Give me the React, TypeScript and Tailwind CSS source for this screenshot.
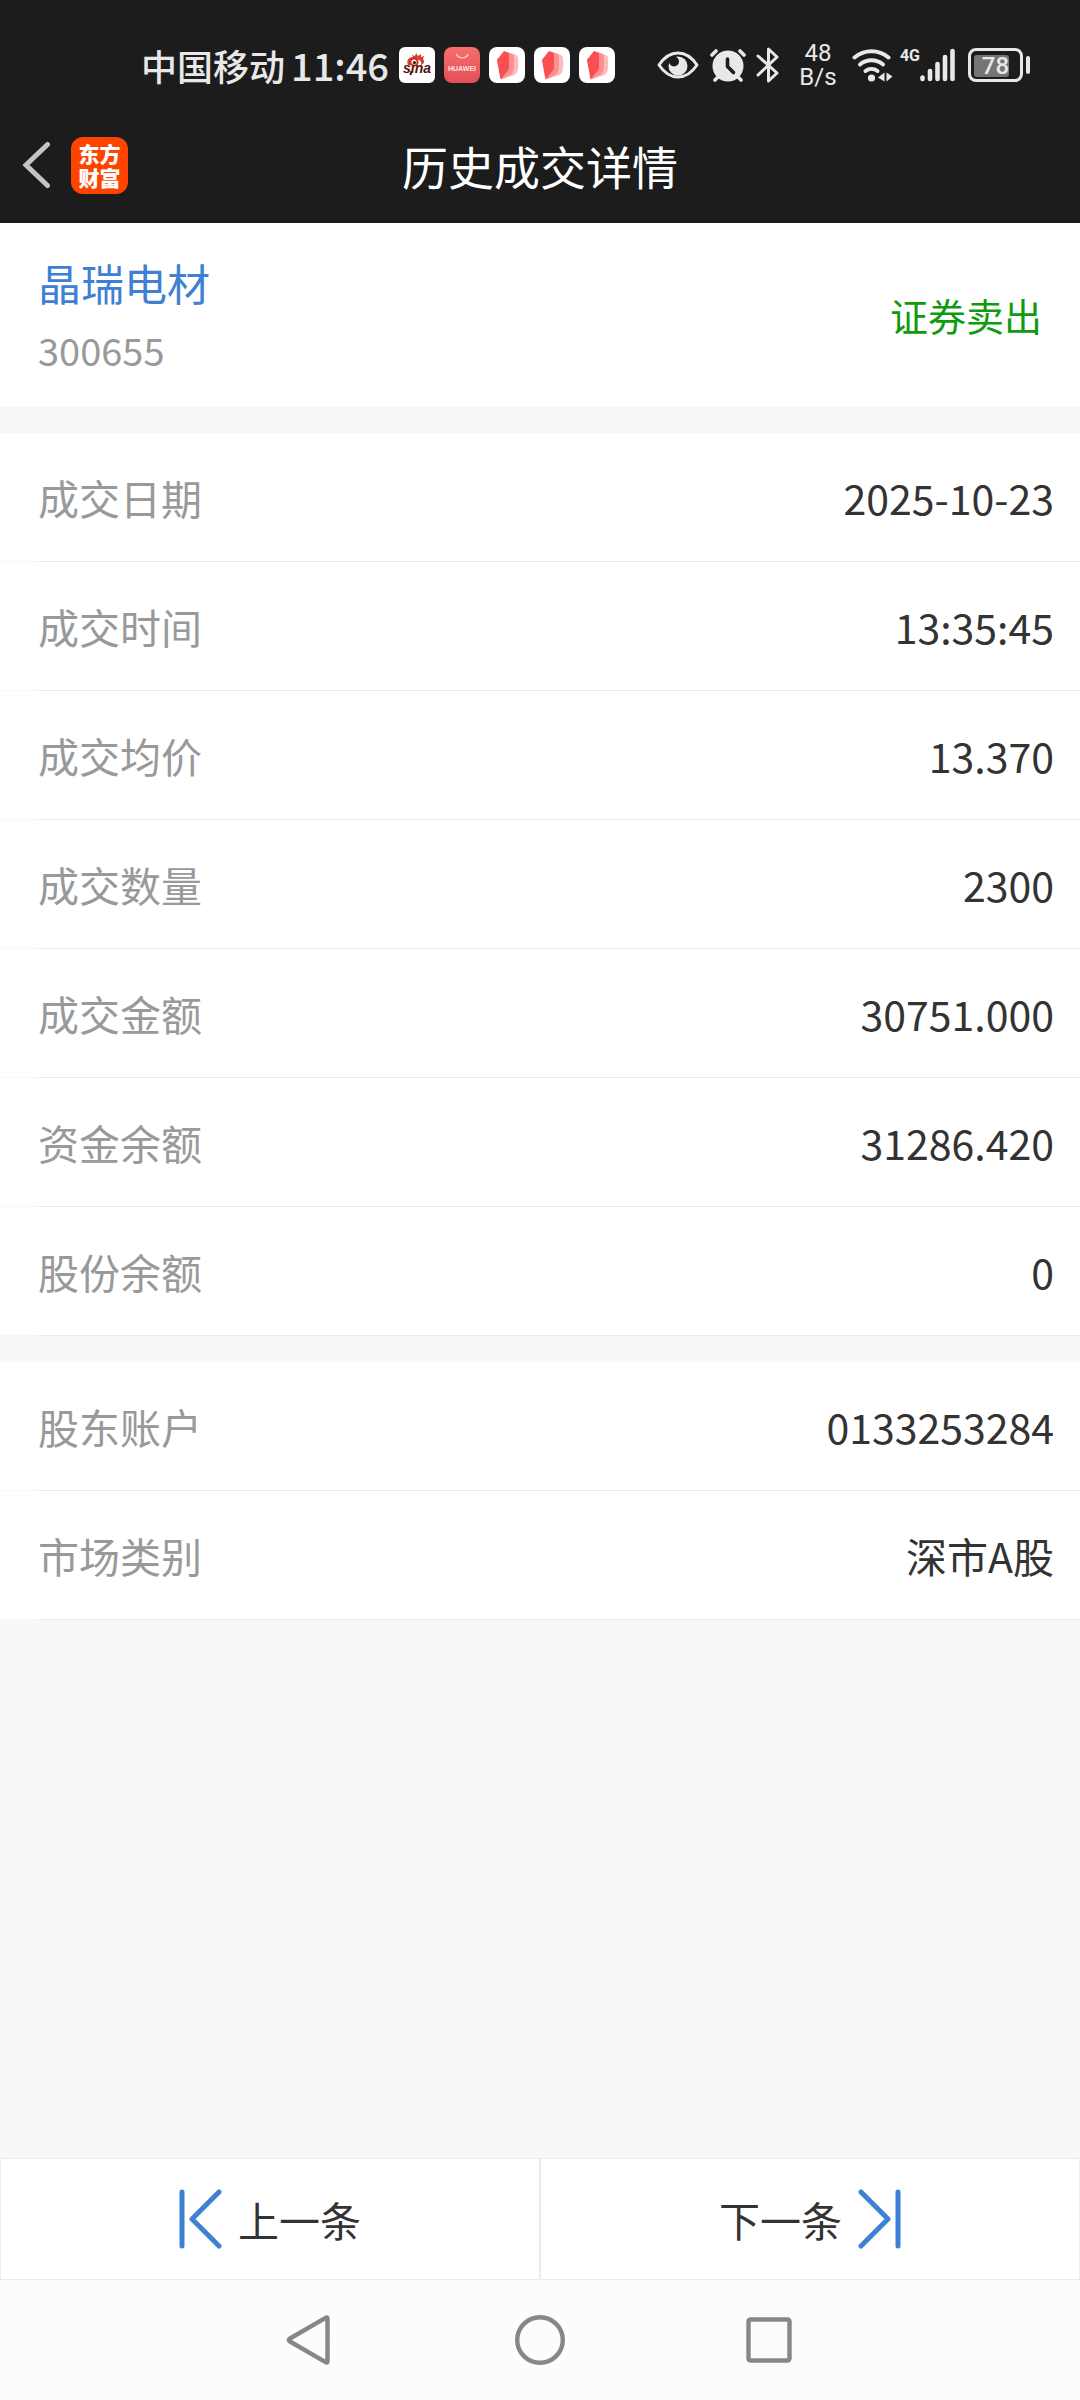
import type { ReactNode } from "react";

type Field = { label: string; value: string };

const tradeFields: Field[] = [
  { label: "成交日期", value: "2025-10-23" },
  { label: "成交时间", value: "13:35:45" },
  { label: "成交均价", value: "13.370" },
  { label: "成交数量", value: "2300" },
  { label: "成交金额", value: "30751.000" },
  { label: "资金余额", value: "31286.420" },
  { label: "股份余额", value: "0" },
];

const accountFields: Field[] = [
  { label: "股东账户", value: "0133253284" },
  { label: "市场类别", value: "深市A股" },
];

function SinaIcon() {
  return (
    <svg className="size-9" viewBox="0 0 36 36" role="img" aria-label="sina">
      <rect width="36" height="36" rx="6" fill="#fff" />
      <path
        d="M9 18c-2-5 1-8 5-8l-1-2 3 1 1-3 2 3 3-2v3l3-1-1 3c2 2 1 5-2 6 1-4-2-6-6-6-4 0-6 3-4 6z"
        fill="#d9402f"
      />
      <circle cx="15" cy="15" r="3.6" fill="none" stroke="#c43325" strokeWidth="2" />
      <circle cx="15.5" cy="15.5" r="1.5" fill="#2a0d0a" />
      <text
        x="18"
        y="25.500"
        textAnchor="middle"
        fontFamily="Liberation Sans, sans-serif"
        fontSize="14"
        fontWeight="700"
        fontStyle="italic"
        fill="#5a130c"
      >
        sina
      </text>
      <path d="M12.500 24l-1 4" stroke="#5a130c" strokeWidth="2" />
    </svg>
  );
}

function HuaweiIcon() {
  return (
    <svg className="size-9" viewBox="0 0 36 36" role="img" aria-label="HUAWEI">
      <defs>
        <linearGradient id="huawei-bg" x1="0" y1="0" x2="0" y2="1">
          <stop offset="0" stopColor="#f4706a" />
          <stop offset="1" stopColor="#e44f59" />
        </linearGradient>
      </defs>
      <rect width="36" height="36" rx="8" fill="url(#huawei-bg)" />
      <path d="M12.500 7a6 5.500 0 0 0 11.500 0" fill="none" stroke="#ffc9c4" strokeWidth="1.300" />
      <text
        x="18"
        y="24"
        textAnchor="middle"
        fontFamily="Liberation Sans, sans-serif"
        fontSize="7"
        fontWeight="700"
        fill="#ffe3e0"
      >
        HUAWEI
      </text>
    </svg>
  );
}

function PagesIcon() {
  return (
    <svg className="size-9" viewBox="0 0 36 36" aria-hidden="true">
      <rect width="36" height="36" rx="8" fill="#fff" />
      <path d="M23 6.500l4 1.500q2 1 2.200 4v8q0 5-4 8l-13 4.500z" fill="#fdbcbc" />
      <path d="M18 5l5 1.500q2 1 2 4v9q0 5-3 8l-10 5z" fill="#fc8f90" />
      <path d="M15 4l4 1.500q1 .5 1 3v12q0 2-1 3l-7.500 9-3.500-19q0-1.500 1-2z" fill="#f94f53" />
    </svg>
  );
}

function EyeIcon() {
  return (
    <svg className="h-7 w-[42px]" viewBox="0 0 42 28" aria-hidden="true">
      <path
        d="M2 14Q10 2 21 2T40 14Q32 26 21 26T2 14z"
        fill="none"
        stroke="#e8e8e8"
        strokeWidth="3"
        strokeLinejoin="round"
      />
      <circle cx="21" cy="15" r="9.500" fill="#e8e8e8" />
      <circle cx="17" cy="10.500" r="5" fill="#1c1c1c" />
    </svg>
  );
}

function AlarmIcon() {
  return (
    <svg className="h-[34px] w-9" viewBox="0 0 36 34" aria-hidden="true">
      <circle cx="18" cy="18" r="15.500" fill="#e8e8e8" />
      <path
        d="M2 7l4-4M34 7l-4-4M5 32l4-4M31 32l-4-4"
        stroke="#e8e8e8"
        strokeWidth="3.600"
        strokeLinecap="round"
      />
      <path
        d="M17.500 11v7.500l6 6"
        fill="none"
        stroke="#1c1c1c"
        strokeWidth="3.600"
        strokeLinecap="round"
        strokeLinejoin="round"
      />
    </svg>
  );
}

function BluetoothIcon() {
  return (
    <svg className="h-9 w-6" viewBox="0 0 24 36" aria-hidden="true">
      <path
        d="M2 9l19 17-8.500 8V2L21 10 2 28"
        fill="none"
        stroke="#e8e8e8"
        strokeWidth="3"
        strokeLinecap="round"
        strokeLinejoin="round"
      />
    </svg>
  );
}

function WifiIcon() {
  return (
    <svg className="h-[34px] w-[41px]" viewBox="0 0 41 34" aria-hidden="true">
      <g fill="none" stroke="#e8e8e8" strokeWidth="4" strokeLinecap="round">
        <path d="M2.500 9.500a26 26 0 0 1 34 0" />
        <path d="M8 16.500a18 18 0 0 1 23 0" />
        <path d="M13.500 23a10 10 0 0 1 12 0" />
      </g>
      <circle cx="19.500" cy="30" r="3.600" fill="#e8e8e8" />
      <path d="M32.500 24.500v9L26 29.500zM34.500 24.500v9l6-5z" fill="#e8e8e8" />
    </svg>
  );
}

function SignalIcon() {
  return (
    <svg className="h-[34px] w-[35px]" viewBox="0 0 35 34" aria-hidden="true">
      <g stroke="#e8e8e8" strokeWidth="4.600" strokeLinecap="round">
        <path d="M2.500 29.500v1.500M10 23v8M17.500 16v15M25 9v22M32.500 3v28" />
      </g>
    </svg>
  );
}

function Battery({ level }: { level: number }) {
  return (
    <div className="flex items-center gap-[3px]">
      <div className="flex h-[34px] w-[55px] items-center rounded-lg border-[3px] border-[#e8e8e8] p-[3px]">
        <div className="grid h-[22px] w-full items-center">
          <div
            className="col-start-1 row-start-1 h-[22px] rounded-[3px] bg-[#757575]"
            style={{ width: `${level + 4}%` }}
          />
          <span className="col-start-1 row-start-1 text-center font-['Roboto','Noto_Sans_CJK_SC',sans-serif] text-2xl leading-6">
            {level}
          </span>
        </div>
      </div>
      <div className="h-[18px] w-1 rounded-full bg-[#e8e8e8]" />
    </div>
  );
}

function StatusBar() {
  return (
    <div className="flex h-[107px] items-center justify-between pt-[23px] pr-[50px] pl-[141px] font-medium text-[#e8e8e8]">
      <div className="flex items-center">
        <span className="text-4xl leading-10">中国移动</span>
        <span className="ml-1.5 text-[38px] leading-10">11:46</span>
        <div className="ml-2.5 flex gap-[9px]">
          <SinaIcon />
          <HuaweiIcon />
          <PagesIcon />
          <PagesIcon />
          <PagesIcon />
        </div>
      </div>
      <div className="flex items-center">
        <EyeIcon />
        <span className="ml-[11px]">
          <AlarmIcon />
        </span>
        <span className="ml-[10px]">
          <BluetoothIcon />
        </span>
        <div className="ml-[18px] flex w-10 flex-col text-center font-['Roboto','Noto_Sans_CJK_SC',sans-serif] text-2xl leading-6 font-normal">
          <span>48</span>
          <span>B/s</span>
        </div>
        <span className="ml-[14px]">
          <WifiIcon />
        </span>
        <span className="ml-[7px] h-[34px] font-['Liberation_Sans_Narrow','Roboto',sans-serif] text-base leading-4 font-bold">
          4G
        </span>
        <SignalIcon />
        <span className="ml-[13px]">
          <Battery level={78} />
        </span>
      </div>
    </div>
  );
}

function TitleBar() {
  return (
    <div className="grid h-[116px] grid-cols-[1fr_auto_1fr] items-center px-[22px] text-white">
      <div className="flex items-center gap-5">
        <button type="button" aria-label="返回">
          <svg className="h-12 w-[29px]" viewBox="0 0 29 48" aria-hidden="true">
            <path
              d="M25.500 3.500L4 24l21.500 20.500"
              fill="none"
              stroke="#c4c4c4"
              strokeWidth="5"
              strokeLinecap="round"
            />
          </svg>
        </button>
        <div className="flex size-[57px] items-center justify-center rounded-xl bg-[#ff4400] text-[21px] leading-6 font-black">
          <span className="w-[42px]">东方财富</span>
        </div>
      </div>
      <h1 className="text-[46px] leading-[60px]">历史成交详情</h1>
    </div>
  );
}

function FieldList({ fields }: { fields: Field[] }) {
  return (
    <dl className="bg-white">
      {fields.map((field) => (
        <div key={field.label}>
          <div className="flex h-32 items-center justify-between pr-[26px] pl-[38px] text-[41px] leading-[60px]">
            <dt className="text-[#999999]">{field.label}</dt>
            <dd className="text-[#333333]">{field.value}</dd>
          </div>
          <div className="flex h-px bg-[#f8f8f8] pl-[38px]">
            <div className="flex-1 bg-[#ebebeb]" />
          </div>
        </div>
      ))}
    </dl>
  );
}

function PagerButton({ children }: { children: ReactNode }) {
  return (
    <button
      type="button"
      className="flex h-[122px] flex-1 items-center justify-center gap-4 border border-[#ebebeb] bg-white text-[41px] leading-[60px] text-[#333333]"
    >
      {children}
    </button>
  );
}

function PagerIcon({ path }: { path: string }) {
  return (
    <svg className="h-[60px] w-[43px]" viewBox="0 0 43 60" aria-hidden="true">
      <path
        d={path}
        fill="none"
        stroke="#3d80d4"
        strokeWidth="5"
        strokeLinecap="round"
        strokeLinejoin="round"
      />
    </svg>
  );
}

function SystemNav() {
  return (
    <nav className="flex h-[120px] items-center justify-center gap-[180px] bg-[#fcfcfc]">
      <button type="button" aria-label="返回">
        <svg className="size-[50px]" viewBox="0 0 50 50" aria-hidden="true">
          <path
            d="M42.500 3.500v43Q42.500 48 41 47.300L5 26.500Q2.500 25 5 23.500L41 2.700Q42.500 2 42.500 3.500z"
            fill="none"
            stroke="#878787"
            strokeWidth="4.400"
            strokeLinejoin="round"
          />
        </svg>
      </button>
      <button type="button" aria-label="主页">
        <svg className="size-[50px]" viewBox="0 0 50 50" aria-hidden="true">
          <circle cx="25" cy="25" r="22.800" fill="none" stroke="#878787" strokeWidth="4.400" />
        </svg>
      </button>
      <button type="button" aria-label="最近任务">
        <svg className="size-[50px]" viewBox="0 0 50 50" aria-hidden="true">
          <rect x="3.500" y="4.500" width="41" height="41" rx="2" fill="none" stroke="#878787" strokeWidth="4.400" />
        </svg>
      </button>
    </nav>
  );
}

export default function App() {
  return (
    <div className="flex min-h-screen flex-col bg-[#f6f8fa] font-['Noto_Sans_CJK_SC',sans-serif]">
      <header className="bg-[#1c1c1c]">
        <StatusBar />
        <TitleBar />
      </header>
      <main className="flex flex-1 flex-col gap-[26px]">
        <section className="flex h-[184px] items-center justify-between bg-white pr-[38px] pl-[38px]">
          <div>
            <h2 className="text-[43px] leading-[70px] text-[#3d80d4]">晶瑞电材</h2>
            <p className="text-[38px] leading-[66px] text-[#999999]">300655</p>
          </div>
          <span className="text-[38px] leading-[60px] text-[#109a10]">证券卖出</span>
        </section>
        <FieldList fields={tradeFields} />
        <FieldList fields={accountFields} />
      </main>
      <footer>
        <div className="flex">
          <PagerButton>
            <PagerIcon path="M3 3v54M40 3L13 30l27 27" />
            上一条
          </PagerButton>
          <PagerButton>
            下一条
            <PagerIcon path="M40 3v54M3 3l27 27L3 57" />
          </PagerButton>
        </div>
        <SystemNav />
      </footer>
    </div>
  );
}
